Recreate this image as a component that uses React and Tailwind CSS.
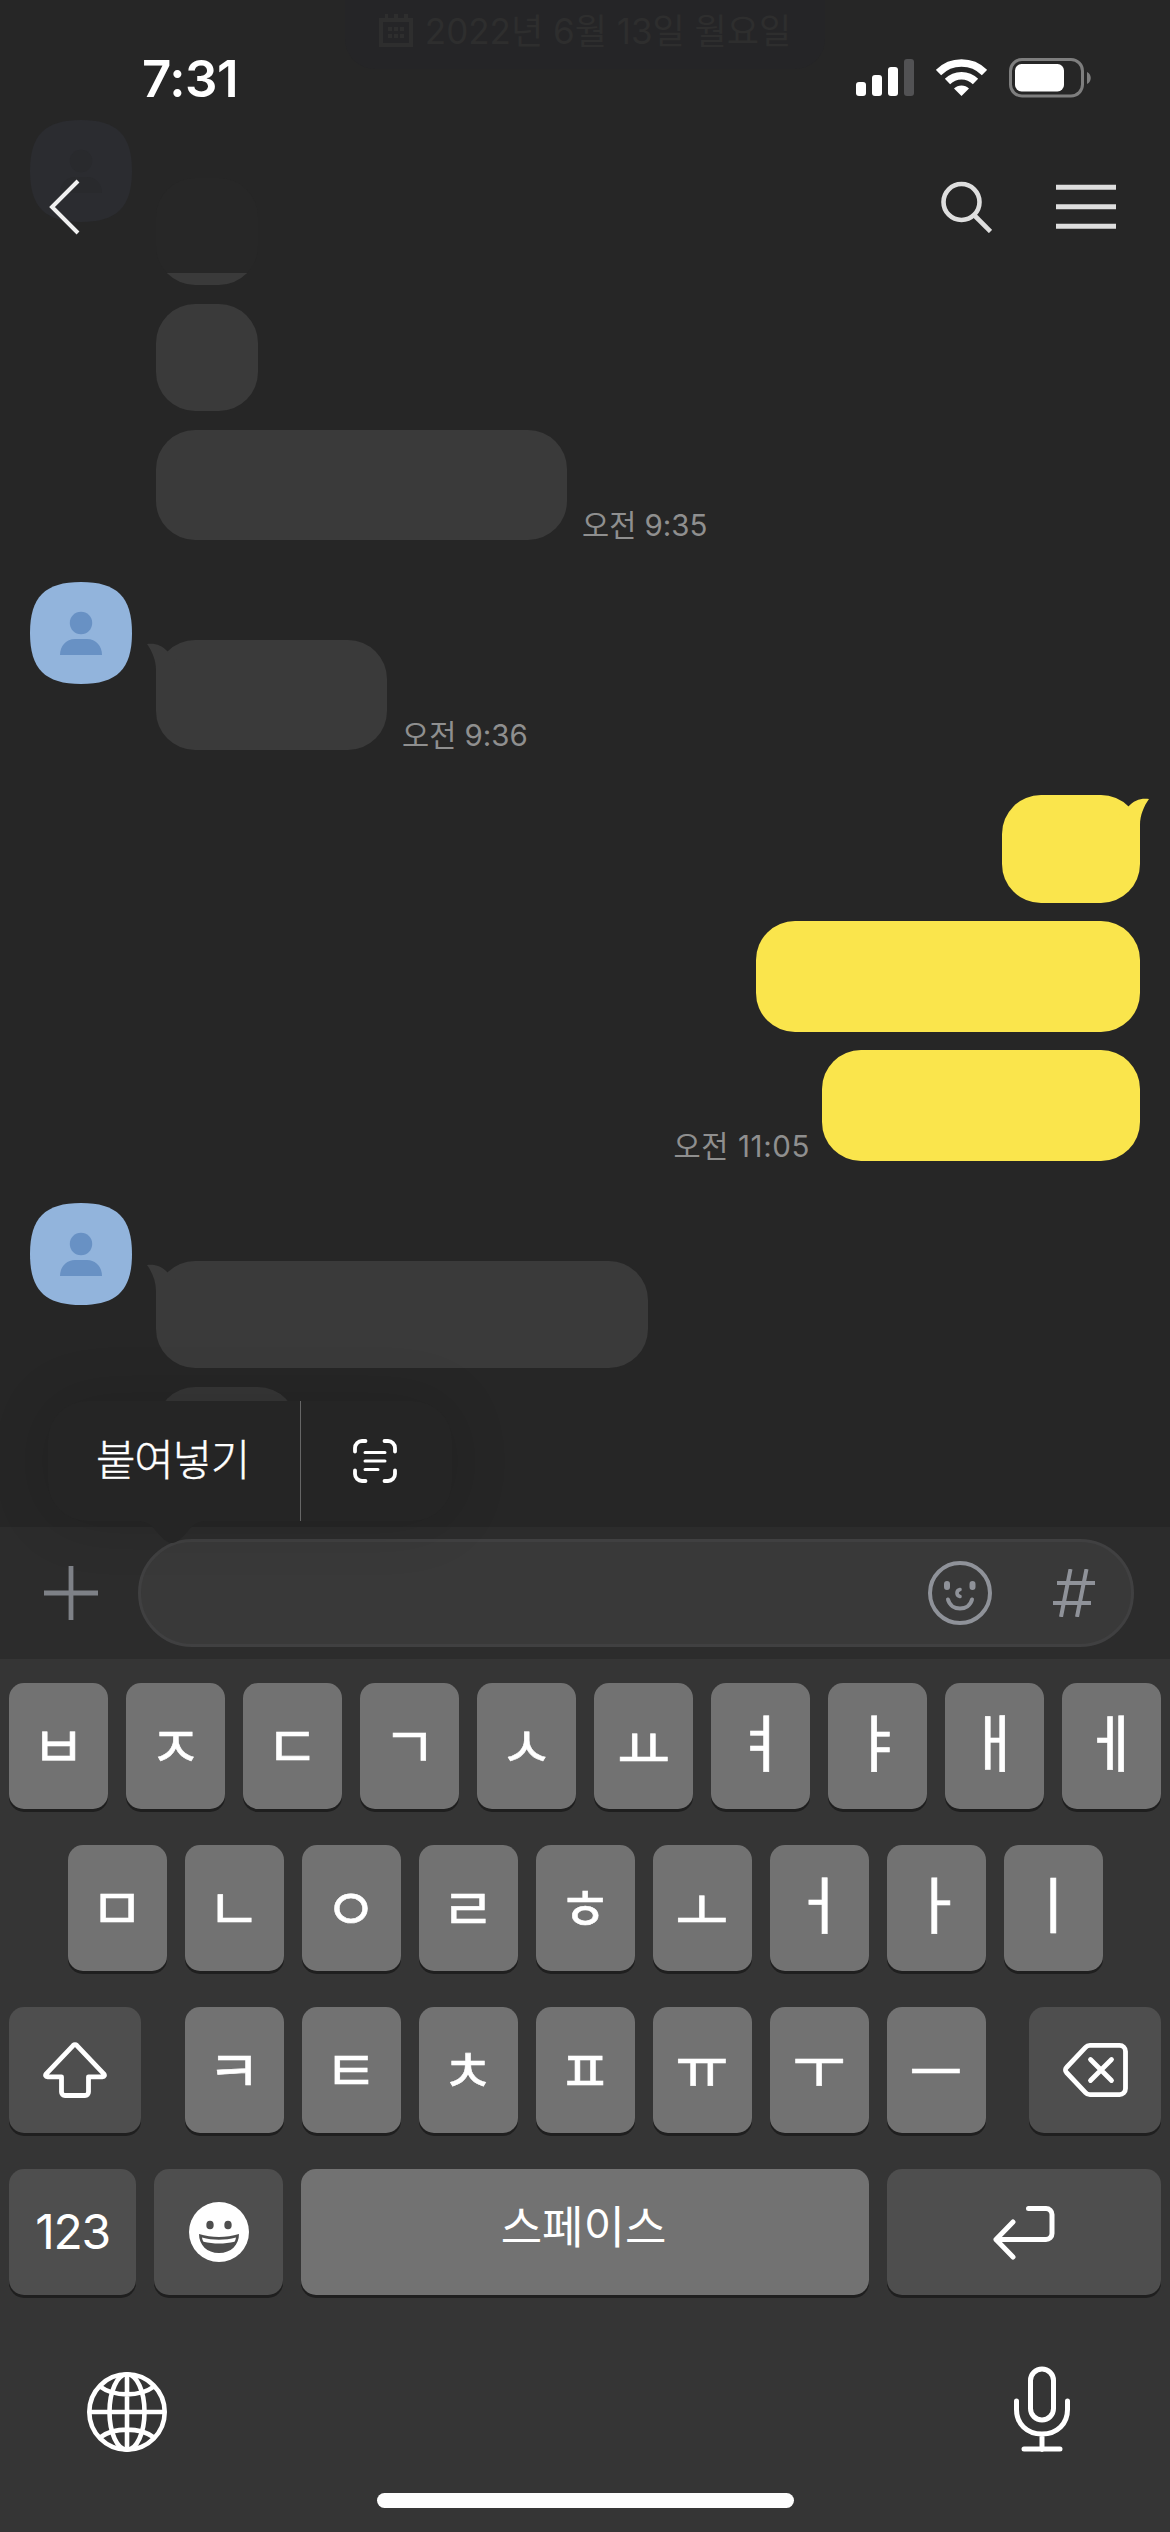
import React from 'react';

const Avatar = () => (
    <svg className="w-[102px] h-[102px] shrink-0" viewBox="0 0 102 102">
        <path d="M51 0C87 0 102 15 102 51S87 102 51 102 0 87 0 51 15 0 51 0Z" fill="#92b4dc" />
        <circle cx="51" cy="41" r="11.2" fill="#6891c4" />
        <path d="M30 73c0-9 6-16 15-16h12c9 0 15 7 15 16Z" fill="#6891c4" />
    </svg>
);

// Little tail at the top corner of the first bubble of a group
const Tail = ({ className }) => (
    <svg className={className} width="30" height="40" viewBox="0 0 30 40" fill="currentColor">
        <path d="M0 4c8-1 15 1 21 8L30 20 9 40V30C9 20 5 11 0 4Z" />
    </svg>
);

const Time = ({ children, className }) => (
    <span className={`text-[29.5px] leading-[36px] text-[#8f8f8f] whitespace-nowrap ${className}`}>{children}</span>
);

const Key = ({ children, className = 'w-[99px]', dark }) => (
    <button
        className={`h-[126px] shrink-0 flex items-center justify-center rounded-[15px] shadow-[0_3px_0_#1f1f1f] ${dark ? 'bg-[#4e4e4e]' : 'bg-[#727272]'} ${className}`}
    >
        {children}
    </button>
);

// Vowels sit a bit differently from consonants inside the key
const letterStyle = (k) => {
    if ('ㅕㅑㅐㅔㅓㅏㅣ'.includes(k)) return 'text-[62px] -mt-[2px]';
    if ('ㅛㅗ'.includes(k)) return 'text-[58px] mt-[8px]';
    if ('ㅠㅜ'.includes(k)) return 'text-[58px] -mt-[4px]';
    if (k === 'ㅡ') return 'text-[58px] mt-[5px]';
    return 'text-[58px] mt-[2px]';
};

const Letter = ({ children }) => (
    <span className={`leading-none [-webkit-text-stroke:0.6px_white] ${letterStyle(children)}`}>{children}</span>
);

const StatusBar = () => (
    <div className="h-[58px] pl-[142px] pr-[79px] flex items-center justify-between">
        <span className="text-[51px] leading-none font-semibold tracking-[-0.5px]">7:31</span>
        <div className="flex items-center">
            <svg width="58" height="38" viewBox="0 0 58 38" fill="#fff">
                <rect x="0" y="23" width="10" height="14" rx="3" />
                <rect x="16" y="16" width="10" height="21" rx="3" />
                <rect x="32" y="8" width="10" height="29" rx="3" />
                <rect x="48" y="0" width="10" height="37" rx="3" fill="#525254" />
            </svg>
            <svg className="ml-[22px]" width="51" height="38" viewBox="0 0 51 38" fill="none" stroke="#fff" strokeWidth="7.5">
                <path d="M2.5 13.5a32.5 32.5 0 0 1 46 0" />
                <path d="M11.5 22.5a19.8 19.8 0 0 1 28 0" />
                <path d="M18 29.5a10.6 10.6 0 0 1 15 0L25.5 37Z" fill="#fff" stroke="none" />
            </svg>
            <svg className="ml-[22px]" width="82" height="40" viewBox="0 0 82 40">
                <rect x="1.5" y="1.5" width="72" height="36.5" rx="11.5" fill="none" stroke="#7e7e7e" strokeWidth="3" />
                <rect x="6" y="6" width="49" height="27.5" rx="6.5" fill="#fff" />
                <path d="M78 14c5 2 5 10 0 12Z" fill="#7e7e7e" />
            </svg>
        </div>
    </div>
);

const Header = () => (
    <header className="relative h-[273px] overflow-hidden">
        {/* Chat content fading out under the bar */}
        <div className="absolute inset-0">
            <div className="mx-auto w-[480px] h-[69px] pt-[10px] flex justify-center rounded-b-[30px] bg-[#252527] text-[#2e2e2e]">
                <svg className="mt-[4px] mr-[12px]" width="34" height="34" viewBox="0 0 34 34" fill="currentColor">
                    <path d="M0 4h6V0h3v4h6V0h4v4h6V0h4v4h5v29H0ZM4 8v21h26V8Z" fillRule="evenodd" />
                    <path d="M9 13h4v4H9zM15 13h4v4h-4zM21 13h4v4h-4zM9 20h4v4H9zM15 20h4v4h-4zM21 20h4v4h-4z" />
                </svg>
                <span className="text-[35px] leading-[42px] whitespace-nowrap">2022년 6월 13일 월요일</span>
            </div>
            <div className="flex pl-[30px] gap-6 mt-[51px]">
                <svg width="102" height="102" viewBox="0 0 102 102">
                    <path d="M51 0C87 0 102 15 102 51S87 102 51 102 0 87 0 51 15 0 51 0Z" fill="#2b2c30" />
                    <circle cx="51" cy="41" r="11.2" fill="#292a2d" />
                    <path d="M30 73c0-9 6-16 15-16h12c9 0 15 7 15 16Z" fill="#292a2d" />
                </svg>
                <div className="mt-[58px] w-[102px] h-[107px] rounded-[39px] bg-[#272727]" />
            </div>
        </div>

        <div className="relative pt-[49px]">
            <StatusBar />
            <div className="mt-[71px] pl-[47px] pr-[54px] flex items-center justify-between">
                <svg width="34" height="58" viewBox="0 0 34 58" fill="none" stroke="#f0f0f0" strokeWidth="4">
                    <path d="M31 3 5 29l26 26" />
                </svg>
                <div className="flex items-center gap-[64px]">
                    <svg width="52" height="52" viewBox="0 0 52 52" fill="none" stroke="#dedede" strokeWidth="4.6">
                        <circle cx="21.5" cy="21" r="18" />
                        <path d="m34 34 16.5 16.5" />
                    </svg>
                    <svg width="60" height="46" viewBox="0 0 60 46" fill="#dedede">
                        <path d="M0 .8h60v5H0zM0 20.3h60v5H0zM0 39.8h60v5H0z" />
                    </svg>
                </div>
            </div>
        </div>
    </header>
);

const Chat = () => (
    <main className="h-[1254px] overflow-hidden">
        <div className="ml-[156px]">
            <div className="h-3 w-[102px] overflow-hidden flex items-end">
                <div className="w-full h-[107px] shrink-0 rounded-[39px] bg-[#3a3a3a]" />
            </div>
            <div className="mt-[19px] w-[102px] h-[107px] rounded-[39px] bg-[#3a3a3a]" />
            <div className="mt-[19px] flex items-end">
                <div className="w-[411px] h-[110px] rounded-[39px] bg-[#3a3a3a]" />
                <Time className="ml-[15px] -mb-[3px]">오전 9:35</Time>
            </div>
        </div>

        <div className="mt-[42px] pl-[30px] flex items-start gap-6">
            <Avatar />
            <div className="mt-[58px] flex items-end">
                <div className="relative w-[231px] h-[110px] rounded-[39px] bg-[#3a3a3a]">
                    <Tail className="absolute -left-[9px] top-0 text-[#3a3a3a]" />
                </div>
                <Time className="ml-[15px] -mb-[3px]">오전 9:36</Time>
            </div>
        </div>

        <div className="mt-[45px] mr-[30px] flex flex-col items-end">
            <div className="relative w-[138px] h-[108px] rounded-[39px] bg-[#fae54c]">
                <Tail className="absolute -right-[9px] top-0 text-[#fae54c] -scale-x-100" />
            </div>
            <div className="mt-[18px] w-[384px] h-[111px] rounded-[39px] bg-[#fae54c]" />
            <div className="mt-[18px] flex items-end">
                <Time className="mr-[12px] -mb-[3px] tracking-[0.6px]">오전 11:05</Time>
                <div className="w-[318px] h-[111px] rounded-[39px] bg-[#fae54c]" />
            </div>
        </div>

        <div className="mt-[42px] pl-[30px] flex items-start gap-6">
            <Avatar />
            <div className="mt-[58px]">
                <div className="relative w-[492px] h-[107px] rounded-[39px] bg-[#3a3a3a]">
                    <Tail className="absolute -left-[9px] top-0 text-[#3a3a3a]" />
                </div>
                <div className="mt-[19px] w-[141px] h-[107px] rounded-[39px] bg-[#363636]" />
            </div>
        </div>
    </main>
);

const EditMenu = () => (
    <div className="absolute left-[48px] top-[1401px] w-[404px] h-[120px] flex rounded-[39px] bg-[#252525] shadow-[0_0_60px_rgba(0,0,0,0.14)]">
        <div className="w-[253px] flex items-center justify-center border-r border-[#666]">
            <span className="text-[43px] leading-none font-light tracking-[-1.3px] text-white whitespace-nowrap [-webkit-text-stroke:0.4px_white] -mt-[1px] -ml-[3px]">붙여넣기</span>
        </div>
        <div className="flex-1 flex items-center justify-center">
            <svg className="-ml-[3px]" width="44" height="44" viewBox="0 0 44 44" fill="none" stroke="#fff" strokeWidth="3.8" strokeLinecap="round">
                <path d="M2 12.5V9a7 7 0 0 1 7-7h3.5M31.5 2H35a7 7 0 0 1 7 7v3.5M42 31.5V35a7 7 0 0 1-7 7h-3.5M12.5 42H9a7 7 0 0 1-7-7v-3.5" />
                <path d="M12 13.5h20M12 22h20M12 30.5h13" strokeWidth="3" />
            </svg>
        </div>
        <svg className="absolute left-[92px] top-[119px]" width="64" height="24" viewBox="0 0 64 24" fill="#252525">
            <path d="M0 1c8 1 12 5 16 10 6 7 11 12 16 12s10-5 16-12C52 6 56 2 64 1Z" />
        </svg>
    </div>
);

const InputBar = () => (
    <div className="h-[132px] pl-[44px] pr-[36px] flex items-center bg-[#2c2c2c]">
        <svg width="54" height="54" viewBox="0 0 54 54" stroke="#7e8187" strokeWidth="4.8">
            <path d="M27 0v54M0 27h54" />
        </svg>
        <div className="ml-[40px] flex-1 h-[108px] pr-[36px] flex items-center justify-end rounded-full border-[3px] border-[#404041] bg-[#393939]">
            <svg width="64" height="64" viewBox="0 0 64 64" fill="none" stroke="#8f9299" strokeWidth="4" strokeLinecap="round">
                <circle cx="32" cy="32" r="30" />
                <path d="M19 23v3M44.5 23v3" strokeWidth="6" />
                <path d="M20 38.5c3 12 21 12 24 0" />
                <path d="M32 28.5c-4 1-4 6 0 7" strokeWidth="3.6" />
            </svg>
            <svg className="ml-[61px]" width="42" height="48" viewBox="0 0 42 48" fill="none" stroke="#8f9299" strokeWidth="4">
                <path d="M17.5 0 8 48M33.5 0 24 48M4 14h38M0 34h38" />
            </svg>
        </div>
    </div>
);

const row1 = ['ㅂ', 'ㅈ', 'ㄷ', 'ㄱ', 'ㅅ', 'ㅛ', 'ㅕ', 'ㅑ', 'ㅐ', 'ㅔ'];
const row2 = ['ㅁ', 'ㄴ', 'ㅇ', 'ㄹ', 'ㅎ', 'ㅗ', 'ㅓ', 'ㅏ', 'ㅣ'];
const row3 = ['ㅋ', 'ㅌ', 'ㅊ', 'ㅍ', 'ㅠ', 'ㅜ', 'ㅡ'];

const Keyboard = () => (
    <div className="h-[873px] px-[9px] pt-6 bg-[#353535]">
        <div className="flex flex-col gap-9">
            <div className="flex justify-between">
                {row1.map((k) => <Key key={k}><Letter>{k}</Letter></Key>)}
            </div>
            <div className="flex justify-center gap-[18px]">
                {row2.map((k) => <Key key={k}><Letter>{k}</Letter></Key>)}
            </div>
            <div className="flex justify-between">
                <Key dark className="w-[132px]">
                    <svg width="64" height="56" viewBox="0 0 64 56" fill="none" stroke="#fff" strokeWidth="4.8" strokeLinejoin="round">
                        <path d="M30.3 3.3 3.2 31.8c-1.2 1.5-.6 3 1.3 3H18.5V50c0 2 1.5 3.500 3.500 3.500h20c2 0 3.500-1.500 3.500-3.500V34.800h14c1.900 0 2.500-1.500 1.300-3L33.700 3.300c-1-1-2.400-1-3.400 0Z" />
                    </svg>
                </Key>
                <div className="flex gap-[18px]">
                    {row3.map((k) => <Key key={k}><Letter>{k}</Letter></Key>)}
                </div>
                <Key dark className="w-[132px]">
                    <svg className="ml-0.5" width="66" height="54" viewBox="0 0 66 54" fill="none" stroke="#fff" strokeWidth="4.8" strokeLinecap="round" strokeLinejoin="round">
                        <path d="M27 2.4h29.5a6 6 0 0 1 6 6v37.2a6 6 0 0 1-6 6H27a6 6 0 0 1-4.5-2L3.5 29.5a3.5 3.5 0 0 1 0-5L22.5 4.4a6 6 0 0 1 4.5-2Z" />
                        <path d="m27.500 16.500 21 21M48.500 16.500l-21 21" />
                    </svg>
                </Key>
            </div>
            <div className="flex justify-between">
                <Key dark className="w-[127px]">
                    <span className="text-[48px] leading-none tracking-[-1.3px]">123</span>
                </Key>
                <Key dark className="w-[129px]">
                    <svg width="60" height="60" viewBox="0 0 60 60" fill="#fff">
                        <circle cx="30" cy="30" r="30" />
                        <g fill="#4e4e4e">
                            <ellipse cx="21" cy="23" rx="3.7" ry="4.3" />
                            <ellipse cx="39" cy="23" rx="3.7" ry="4.3" />
                            <path d="M10 32c13 4 27 4 40 0 0 11-8 19-20 19S10 43 10 32Z" />
                        </g>
                        <path d="M13 35.5c11 3 23 3 34 0-.3 2-.8 3.3-1.5 4.2-10 2.4-21 2.4-31 0-.8-1-1.200-2.400-1.500-4.200Z" />
                    </svg>
                </Key>
                <Key className="w-[568px]">
                    <span className="text-[45px] leading-none -mt-[9px] -ml-[3px]">스페이스</span>
                </Key>
                <Key dark className="w-[274px]">
                    <svg width="62" height="55" viewBox="0 0 62 55" fill="none" stroke="#fff" strokeWidth="5" strokeLinecap="round" strokeLinejoin="round">
                        <path d="M35.5 3.5H53a6 6 0 0 1 6 6v19a6 6 0 0 1-6 6H3M20 17 3 34.5 20 52" />
                    </svg>
                </Key>
            </div>
        </div>

        <div className="mt-[70px] pl-[78px] pr-[91px] flex items-center justify-between">
            <svg className="mt-[6px]" width="80" height="80" viewBox="0 0 80 80" fill="none" stroke="#fff" strokeWidth="4.6">
                <circle cx="40" cy="40" r="37.7" />
                <ellipse cx="40" cy="40" rx="17.5" ry="37.7" />
                <path d="M40 2v76M2 40h76M13 14.5c14 10.5 40 10.5 54 0M13 65.5c14-10.5 40-10.5 54 0" />
            </svg>
            <svg width="56" height="88" viewBox="0 0 56 88" fill="none" stroke="#fff" strokeWidth="5" strokeLinecap="round">
                <rect x="16.5" y="4" width="23" height="51" rx="11.5" />
                <path d="M2.5 36V44.500c0 14 10 24.500 25.500 24.500S53.500 58.500 53.500 44.500V36M28 69.500v15M10 84h36" />
            </svg>
        </div>
        <div className="mt-[40px] mx-auto w-[417px] h-[15px] rounded-full bg-[#fdfdfd]" />
    </div>
);

const App = () => {
    return (
        <div className="relative w-[1170px] h-[2532px] overflow-hidden bg-[#262626] text-white font-[Inter,'Noto_Sans_CJK_KR',sans-serif]">
            <Header />
            <Chat />
            <InputBar />
            <Keyboard />
            <EditMenu />
        </div>
    );
};

export default App;
